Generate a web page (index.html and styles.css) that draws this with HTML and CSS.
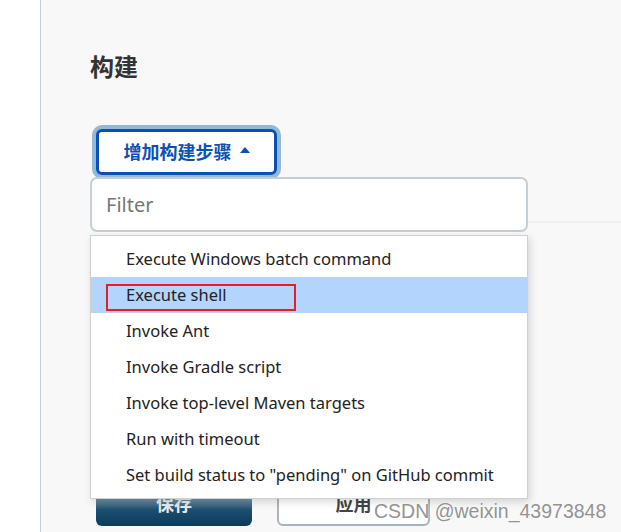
FILE: index.html
```html
<!DOCTYPE html>
<html lang="zh-CN">
<head>
    <meta charset="UTF-8">
    <meta name="viewport" content="width=device-width, initial-scale=1.0">
    <title>构建</title>
    <link rel="stylesheet" href="styles.css">
</head>
<body>
    <div class="sidebar"></div>
    <div class="main">
        <h2 class="section-title">构建</h2>
        <div class="add-step">
            <button class="add-button">增加构建步骤 <span class="caret"></span></button>
        </div>
        <div class="divider"></div>
        <div class="actions">
            <button class="save">保存</button>
            <button class="apply">应用</button>
        </div>

        <div class="popup">
            <input type="text" class="filter" placeholder="Filter">
            <ul class="menu">
                <li>Execute Windows batch command</li>
                <li class="active">Execute shell<span class="mark"></span></li>
                <li>Invoke Ant</li>
                <li>Invoke Gradle script</li>
                <li>Invoke top-level Maven targets</li>
                <li>Run with timeout</li>
                <li>Set build status to "pending" on GitHub commit</li>
            </ul>
        </div>
    </div>
    <div class="watermark">CSDN @weixin_43973848</div>
</body>
</html>
```

FILE: styles.css
```css
body {
    margin: 0;
    display: flex;
    height: 532px;
    overflow: hidden;
    font-family: "Noto Sans", "Noto Sans CJK SC", sans-serif;
    background: #f8f8f8;
}
.sidebar {
    width: 40px;
    background: #fff;
    border-right: 1px solid #c3ced7;
}
.main {
    flex: 1;
    position: relative;
    padding-left: 49px;
}
.section-title {
    margin: 50px 0 0;
    font-size: 24px;
    line-height: 32px;
    font-weight: bold;
    color: #333;
    font-family: "Noto Sans CJK SC", sans-serif;
}
.add-step {
    margin-top: 43px;
    margin-left: 2px;
    display: inline-block;
    padding: 4px;
    border-radius: 10px;
    background: #94b9d4;
}
.add-button {
    display: flex;
    align-items: center;
    justify-content: center;
    gap: 8px;
    width: 181px;
    height: 46px;
    border: 3px solid #0b50b4;
    border-radius: 6px;
    background: #fff;
    color: #0b50b4;
    font-family: "Noto Sans CJK SC", sans-serif;
    font-size: 18px;
    font-weight: bold;
    padding: 0 0 2px;
}
.caret {
    width: 0;
    height: 0;
    border-left: 5px solid transparent;
    border-right: 5px solid transparent;
    border-bottom: 6px solid #0b50b4;
    margin-top: -2px;
}
.divider {
    margin-top: 42px;
    height: 2px;
    background: #efefef;
}
.actions {
    display: flex;
    gap: 25px;
    margin-top: 257px;
    margin-left: 6px;
}
.actions button {
    height: 46px;
    border-radius: 6px;
    font-family: "Noto Sans CJK SC", sans-serif;
    font-size: 18px;
    font-weight: bold;
}
.save {
    width: 156px;
    border: none;
    color: #e4eaef;
    background: linear-gradient(#d4dde4 0%, #8aa0b0 35%, #1c4e70 65%, #0b3a5c);
}
.apply {
    width: 153px;
    border: 2px solid #a9b4bd;
    background: #fff;
    color: #444;
}
.popup {
    position: absolute;
    top: 177px;
    left: 49px;
    width: 438px;
}
.filter {
    display: block;
    box-sizing: border-box;
    width: 438px;
    height: 55px;
    border: 2px solid #c5ced4;
    border-radius: 7px;
    background: #fff;
    padding: 0 14px;
    font-family: "Noto Sans", sans-serif;
    font-size: 20px;
    outline: none;
}
.filter::placeholder {
    color: #777;
}
.menu {
    list-style: none;
    margin: 3px 0 0;
    padding: 5px 0;
    background: #fff;
    border: 1px solid #d0d0d0;
    box-shadow: 2px 3px 8px rgba(0, 0, 0, 0.15);
}
.menu li {
    position: relative;
    height: 36px;
    line-height: 36px;
    padding-left: 35px;
    font-size: 16.5px;
    color: #222;
    white-space: nowrap;
}
.menu li.active {
    background: #b3d4fd;
}
.mark {
    position: absolute;
    left: 15px;
    top: 7px;
    width: 186px;
    height: 23px;
    border: 2px solid #e81c24;
}
.watermark {
    position: absolute;
    left: 374px;
    top: 500px;
    font-family: "Liberation Sans", Arial, sans-serif;
    font-size: 19.5px;
    color: #939393;
    text-shadow: 0 0 2px #fff;
}
```
